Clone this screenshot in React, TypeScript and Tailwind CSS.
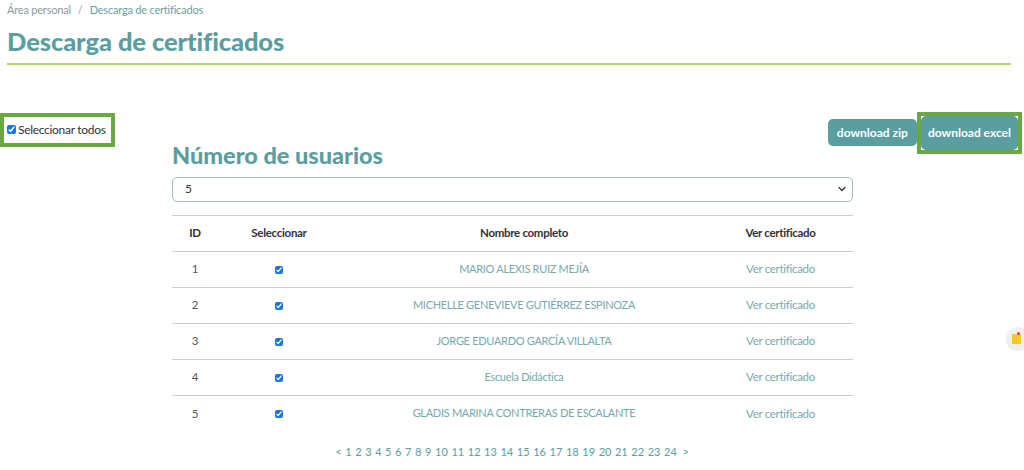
import { ChevronDown } from "lucide-react";

const users = [
  { id: 1, name: "MARIO ALEXIS RUIZ MEJÍA" },
  { id: 2, name: "MICHELLE GENEVIEVE GUTIÉRREZ ESPINOZA" },
  { id: 3, name: "JORGE EDUARDO GARCÍA VILLALTA" },
  { id: 4, name: "Escuela Didáctica" },
  { id: 5, name: "GLADIS MARINA CONTRERAS DE ESCALANTE" },
];

const pages = Array.from({ length: 24 }, (_, i) => i + 1);

const App = () => {
  return (
    <div className="relative w-[1024px] h-[470px] overflow-hidden bg-white font-['Lato',sans-serif] text-[#333]">
      {/* breadcrumb + title */}
      <div className="px-[7px] pt-[2px]">
        <div className="flex items-center gap-[7px] text-[11px] tracking-[-0.2px] text-[#8a9a9a]">
          <span>Área personal</span>
          <span className="text-[#999]">/</span>
          <span className="text-[#6a9fa2]">Descarga de certificados</span>
        </div>
        <h1 className="mt-[7px] text-[25.5px] leading-[30px] font-black tracking-[-0.1px] text-[#5a9ea0]">
          Descarga de certificados
        </h1>
        <div className="mt-[7px] mr-[6px] h-[2px] bg-[#a8e063]" />
      </div>

      {/* controls row */}
      <div className="flex justify-between mt-[48px]">
        <label className="flex items-center gap-[2px] h-[34px] w-[115px] border-4 border-[#6aa844] pl-[3px] text-[12px] text-[#333] whitespace-nowrap">
          <input type="checkbox" defaultChecked className="w-[9px] h-[9px] accent-[#1a73e8]" />
          <span className="tracking-[-0.3px]">Seleccionar todos</span>
        </label>
        <div className="flex items-center mt-[-1px] mr-[2px] h-[42px]">
          <button className="h-[27px] px-[9px] rounded-[5px] bg-[#5a9ea0] text-white text-[12px] font-bold">
            download zip
          </button>
          <div className="border-4 border-[#6aa844]">
            <button className="h-[34px] px-[7px] rounded-[5px] bg-[#5a9ea0] text-white text-[12px] font-bold">
              download excel
            </button>
          </div>
        </div>
      </div>

      {/* main content */}
      <div className="ml-[172px] w-[681px] mt-[-12px]">
        <h2 className="text-[23.5px] leading-[26px] font-black text-[#5a9ea0]">Número de usuarios</h2>
        <div className="mt-[9px] h-[25px] flex items-center justify-between border border-[#9fbcbc] rounded-[5px] pl-[12px] pr-[4px] text-[12px]">
          <span>5</span>
          <ChevronDown size={12} strokeWidth={3} className="text-[#444]" />
        </div>

        <table className="mt-[13px] w-full border-collapse text-[11px] tracking-[-0.3px]">
          <thead>
            <tr className="h-[36px] border-t border-b border-[#c8d0d0] text-[11.5px]">
              <th className="w-[46px] font-bold text-center">ID</th>
              <th className="w-[122px] font-bold text-center">Seleccionar</th>
              <th className="w-[368px] font-bold text-center">Nombre completo</th>
              <th className="w-[145px] font-bold text-center">Ver certificado</th>
            </tr>
          </thead>
          <tbody>
            {users.map((user, idx) => (
              <tr
                key={user.id}
                className={`h-[36px] ${idx < users.length - 1 ? "border-b border-[#c8d0d0]" : ""}`}
              >
                <td className="text-center text-[#555] text-[11.5px]">{user.id}</td>
                <td className="text-center">
                  <input type="checkbox" defaultChecked className="w-[8px] h-[8px] align-middle accent-[#1a73e8]" />
                </td>
                <td className="text-center text-[#76a9ac]">{user.name}</td>
                <td className="text-center text-[#76a9ac] text-[11.5px]">Ver certificado</td>
              </tr>
            ))}
          </tbody>
        </table>
      </div>

      {/* pagination */}
      <div className="mt-[13px] flex justify-center gap-[3.6px] text-[11px] text-[#5a9ea0]">
        <span>&lt;</span>
        {pages.map((p) => (
          <span key={p}>{p}</span>
        ))}
        <span className="ml-[2px]">&gt;</span>
      </div>

      {/* floating sticky note */}
      <div className="absolute left-[1006px] top-[327px] w-[24px] h-[24px] rounded-full bg-[#eef0f0] flex items-center justify-center">
        <div className="relative w-[9px] h-[10px] bg-[#f7c531] mr-[4px]">
          <div className="absolute -top-[2px] right-[1px] w-[3px] h-[3px] rounded-full bg-[#e84040]" />
        </div>
      </div>
    </div>
  );
};

export default App;
